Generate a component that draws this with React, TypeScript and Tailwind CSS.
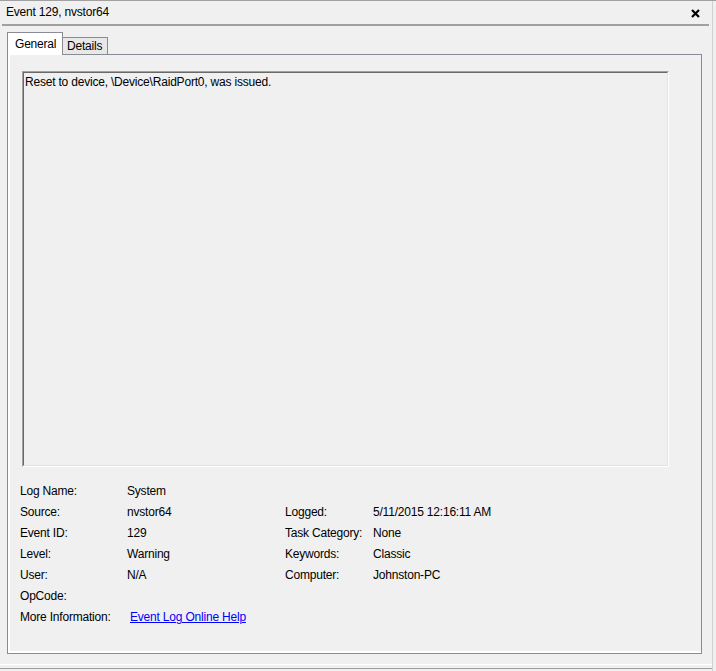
import React from 'react';

const rows: [string, string, string, string][] = [
  ['Log Name:', 'System', '', ''],
  ['Source:', 'nvstor64', 'Logged:', '5/11/2015 12:16:11 AM'],
  ['Event ID:', '129', 'Task Category:', 'None'],
  ['Level:', 'Warning', 'Keywords:', 'Classic'],
  ['User:', 'N/A', 'Computer:', 'Johnston-PC'],
  ['OpCode:', '', '', ''],
];

export default function App() {
  return (
    <div className="w-[716px] h-[671px] bg-[#f0f0f0] border-t border-[#a0a0a0] font-['Liberation_Sans',sans-serif] text-[12px] leading-[15px] tracking-[-0.2px] text-black overflow-hidden">
      <div className="w-[713px] h-full border-r border-[#d0d0d0] flex flex-col">
        {/* title bar */}
        <div className="h-[23px] flex items-center justify-between pl-[6px] pr-[12px]">
          <span>Event 129, nvstor64</span>
          <svg width="9" height="9" viewBox="0 0 9 9" className="mt-[2px]">
            <path d="M1 1 L8 8 M8 1 L1 8" stroke="#000" strokeWidth="2.2" />
          </svg>
        </div>
        <div className="ml-[2px] w-[707px] h-[2px] bg-[#a0a0a0]" />

        {/* tabs */}
        <div className="pt-[6px] pl-[7px] flex items-end">
          <div className="relative z-10 -mb-px h-[23px] w-[56px] bg-white border border-b-0 border-[#898c95] pl-[7px] pt-[4px]">
            General
          </div>
          <div className="h-[17px] w-[45px] bg-[#e8e8e8] border border-l-0 border-b-0 border-[#898c95] pl-[4px] pt-[1px]">
            Details
          </div>
        </div>

        {/* panel */}
        <div className="ml-[7px] w-[695px] h-[600px] border border-[#898c95] shadow-[inset_2px_-2px_0_#fff] pt-[16px] pl-[14px]">
          <div className="w-[647px] h-[396px] border-t border-l border-[#a0a0a0] border-b border-r border-b-white border-r-white">
            <div className="w-full h-full border-t border-l border-[#696969] border-b border-r border-b-[#e3e3e3] border-r-[#e3e3e3] pl-[1px] pt-[2px]">
              Reset to device, \Device\RaidPort0, was issued.
            </div>
          </div>

          <div className="mt-[14px] ml-[-2px] grid grid-cols-[107px_158px_88px_1fr] auto-rows-[21px] items-center">
            {rows.map((r, i) => (
              <React.Fragment key={i}>
                <span>{r[0]}</span>
                <span>{r[1]}</span>
                <span>{r[2]}</span>
                <span>{r[3]}</span>
              </React.Fragment>
            ))}
            <span>More Information:</span>
            <span className="col-span-3 ml-[3px]">
              <a href="#" className="text-[#0000ff] underline">Event Log Online Help</a>
            </span>
          </div>
        </div>

        {/* bottom frame lines */}
        <div className="mt-[10px] h-px bg-white" />
        <div className="mt-[3px] h-px bg-[#a0a0a0]" />
      </div>
    </div>
  );
}
